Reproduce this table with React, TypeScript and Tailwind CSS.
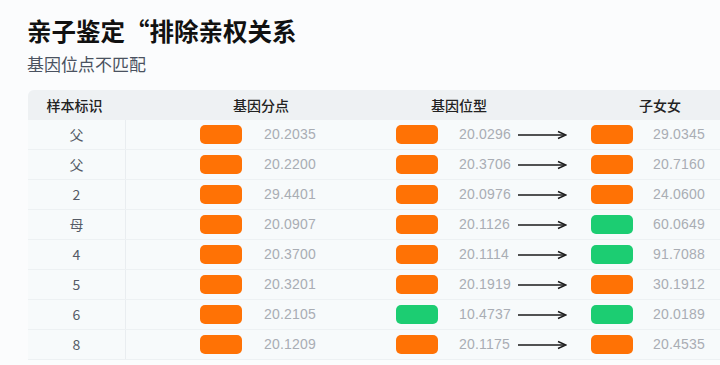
const font = "font-['Noto_Sans_CJK_SC','Noto_Sans',sans-serif]";

interface Row {
  id: string;
  a: number;
  b: number;
  c: number;
  ga?: boolean;
  gb?: boolean;
  gc?: boolean;
}

const rows: Row[] = [
  { id: "父", a: 20.2035, b: 20.0296, c: 29.0345 },
  { id: "父", a: 20.22, b: 20.3706, c: 20.716 },
  { id: "2", a: 29.4401, b: 20.0976, c: 24.06 },
  { id: "母", a: 20.0907, b: 20.1126, c: 60.0649, gc: true },
  { id: "4", a: 20.37, b: 20.1114, c: 91.7088, gc: true },
  { id: "5", a: 20.3201, b: 20.1919, c: 30.1912 },
  { id: "6", a: 20.2105, b: 10.4737, c: 20.0189, gb: true, gc: true },
  { id: "8", a: 20.1209, b: 20.1175, c: 20.4535 },
];

const Pill = ({ green }: { green?: boolean }) => (
  <span
    className={`block w-[42px] h-[19px] rounded-[5px] shrink-0 ${
      green ? "bg-[#1ccd72]" : "bg-[#ff7205]"
    }`}
  />
);

const Num = ({ v, w }: { v: number; w: string }) => (
  <span className={`block ${w} shrink-0 text-[14px] text-[#a9adb4] font-['Liberation_Sans',sans-serif] tracking-[0.2px]`}>
    {v.toFixed(4)}
  </span>
);

const Arrow = () => (
  <svg width="49" height="10" viewBox="0 0 49 10" className="shrink-0">
    <line x1="0" y1="5" x2="46" y2="5" stroke="#1a1a1a" strokeWidth="1.4" />
    <path d="M40 1.5 L48 5 L40 8.5" fill="none" stroke="#1a1a1a" strokeWidth="1.4" />
  </svg>
);

export default function App() {
  return (
    <div className={`w-[720px] h-[365px] overflow-hidden bg-[#fbfcfd] ${font}`}>
      <div className="pl-[27px] pt-[14px]">
        <h1 className="text-[24.5px] leading-[34px] font-bold text-[#111]">亲子鉴定“排除亲权关系</h1>
        <p className="mt-[5px] text-[17px] leading-[22px] text-[#4a5260]">基因位点不匹配</p>
      </div>
      <div className="ml-[28px] mt-[15px] bg-[#f7fafb] rounded-tl-[6px]">
        <div className="flex items-center h-[30px] bg-[#eef1f3] rounded-tl-[6px] text-[14px] font-medium text-[#222]">
          <span className="w-[98px] text-center pr-[5px]">样本标识</span>
          <span className="ml-[107px]">基因分点</span>
          <span className="ml-[142px]">基因位型</span>
          <span className="ml-[152px]">子女女</span>
        </div>
        {rows.map((r, i) => (
          <div key={i} className="flex items-center h-[30px] border-b border-[#edf1f3]">
            <span className="w-[98px] h-full flex items-center justify-center border-r border-[#e9edf0] text-[14px] text-[#555b66]">
              {r.id}
            </span>
            <span className="ml-[74px]"><Pill green={r.ga} /></span>
            <span className="ml-[22px]"><Num v={r.a} w="w-[60px]" /></span>
            <span className="ml-[72px]"><Pill green={r.gb} /></span>
            <span className="ml-[21px]"><Num v={r.b} w="w-[48px]" /></span>
            <span className="ml-[11px] flex"><Arrow /></span>
            <span className="ml-[24px]"><Pill green={r.gc} /></span>
            <span className="ml-[20px]"><Num v={r.c} w="w-[50px]" /></span>
          </div>
        ))}
      </div>
    </div>
  );
}
